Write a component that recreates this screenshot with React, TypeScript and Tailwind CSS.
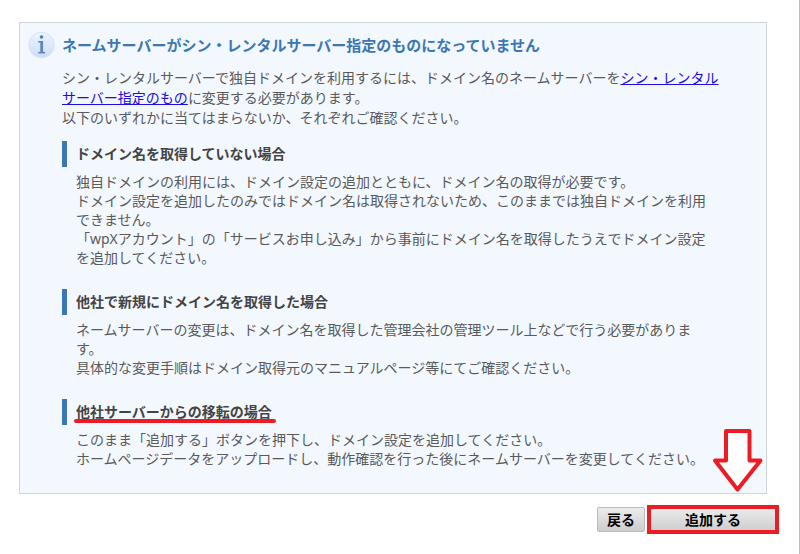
import type { ReactNode } from 'react';

export default function App() {
  return (
    <div className="min-h-screen border-r border-[#bdbdbd] bg-white pt-[22px] pb-5 pl-[19px] font-['Noto_Sans','Noto_Sans_CJK_JP',sans-serif] text-[14px] leading-[19px] text-[#5a5a5a]">
      <main className="mr-8 border border-[#d2d5d8] bg-[#f3f8ff] pt-2 pr-[35px] pb-[25px] pl-2">
        <div className="flex items-center gap-[6px]">
          <InfoIcon />
          <h1 className="text-[15px] leading-5 font-bold text-[#3b77b4]">
            ネームサーバーがシン・レンタルサーバー指定のものになっていません
          </h1>
        </div>

        <div className="mt-[9px] pl-[34px]">
          <p className="leading-5">
            シン・レンタルサーバーで独自ドメインを利用するには、ドメイン名のネームサーバーを
            <a href="#nameserver" className="text-[#1a0dea] underline">
              シン・レンタルサーバー指定のもの
            </a>
            に変更する必要があります。
            <br />
            以下のいずれかに当てはまらないか、それぞれご確認ください。
          </p>

          <div className="mt-[13px] space-y-[22px]">
            <Case title="ドメイン名を取得していない場合">
              独自ドメインの利用には、ドメイン設定の追加とともに、ドメイン名の取得が必要です。
              <br />
              ドメイン設定を追加したのみではドメイン名は取得されないため、このままでは独自ドメインを利用できません。
              <br />
              「wpXアカウント」の「サービスお申し込み」から事前にドメイン名を取得したうえでドメイン設定を追加してください。
            </Case>
            <Case title="他社で新規にドメイン名を取得した場合">
              ネームサーバーの変更は、ドメイン名を取得した管理会社の管理ツール上などで行う必要があります。
              <br />
              具体的な変更手順はドメイン取得元のマニュアルページ等にてご確認ください。
            </Case>
            <Case title="他社サーバーからの移転の場合" marked>
              このまま「追加する」ボタンを押下し、ドメイン設定を追加してください。
              <br />
              ホームページデータをアップロードし、動作確認を行った後にネームサーバーを変更してください。
            </Case>
          </div>
        </div>
      </main>

      <div className="mt-[11px] mr-5 flex items-center justify-end gap-[2px] text-black">
        <button
          type="button"
          className="h-[25px] w-12 rounded-[2px] border border-[#bbb] bg-linear-to-b from-[#ececec] to-[#cdcdcd] font-bold"
        >
          戻る
        </button>
        <div className="relative flex w-[132px] border-4 border-[#ed1c24]">
          <button
            type="button"
            className="h-[21px] w-full bg-linear-to-b from-[#ebebeb] to-[#cecece] font-bold"
          >
            追加する
          </button>
          <DownArrow />
        </div>
      </div>
    </div>
  );
}

function Case({ title, marked, children }: { title: string; marked?: boolean; children: ReactNode }) {
  return (
    <section>
      <h2 className="flex h-[26px] items-center border-l-5 border-[#3b77b4] pb-[2px] pl-[9px] font-bold text-[#444]">
        <span className="relative">
          {title}
          {marked && (
            <span className="absolute -right-1 -bottom-[2px] -left-[2px] h-1 rounded-full bg-[#ed1c24]" />
          )}
        </span>
      </h2>
      <p className="mt-[5px] pr-[15px] pl-[14px]">{children}</p>
    </section>
  );
}

function InfoIcon() {
  return (
    <svg width="28" height="28" viewBox="0 0 28 28" className="shrink-0" aria-hidden="true">
      <defs>
        <linearGradient id="info-fill" x1="0" y1="0" x2="0" y2="1">
          <stop offset="0" stopColor="#edf4fd" />
          <stop offset="0.5" stopColor="#dce9fa" />
          <stop offset="1" stopColor="#cbddf5" />
        </linearGradient>
      </defs>
      <circle cx="13.5" cy="14" r="12.8" fill="url(#info-fill)" stroke="#d5e3f5" />
      <circle cx="13.5" cy="6" r="1.8" fill="#4f7fb5" />
      <path d="M10.2 10h4.9v10.7l2 .4v1.4h-6.8v-1.4l2-.4v-8.9l-2.1-.4z" fill="#5f86b6" />
    </svg>
  );
}

function DownArrow() {
  return (
    <svg
      width="52"
      height="65"
      viewBox="0 0 52 65"
      className="absolute right-[11px] bottom-[37px]"
      aria-hidden="true"
    >
      <path
        d="M14 3H37.5V32.5H48.5L25.5 61.5L3 32.5H14Z"
        fill="#fff"
        stroke="#ed1c24"
        strokeWidth="4"
        strokeLinejoin="round"
      />
    </svg>
  );
}
